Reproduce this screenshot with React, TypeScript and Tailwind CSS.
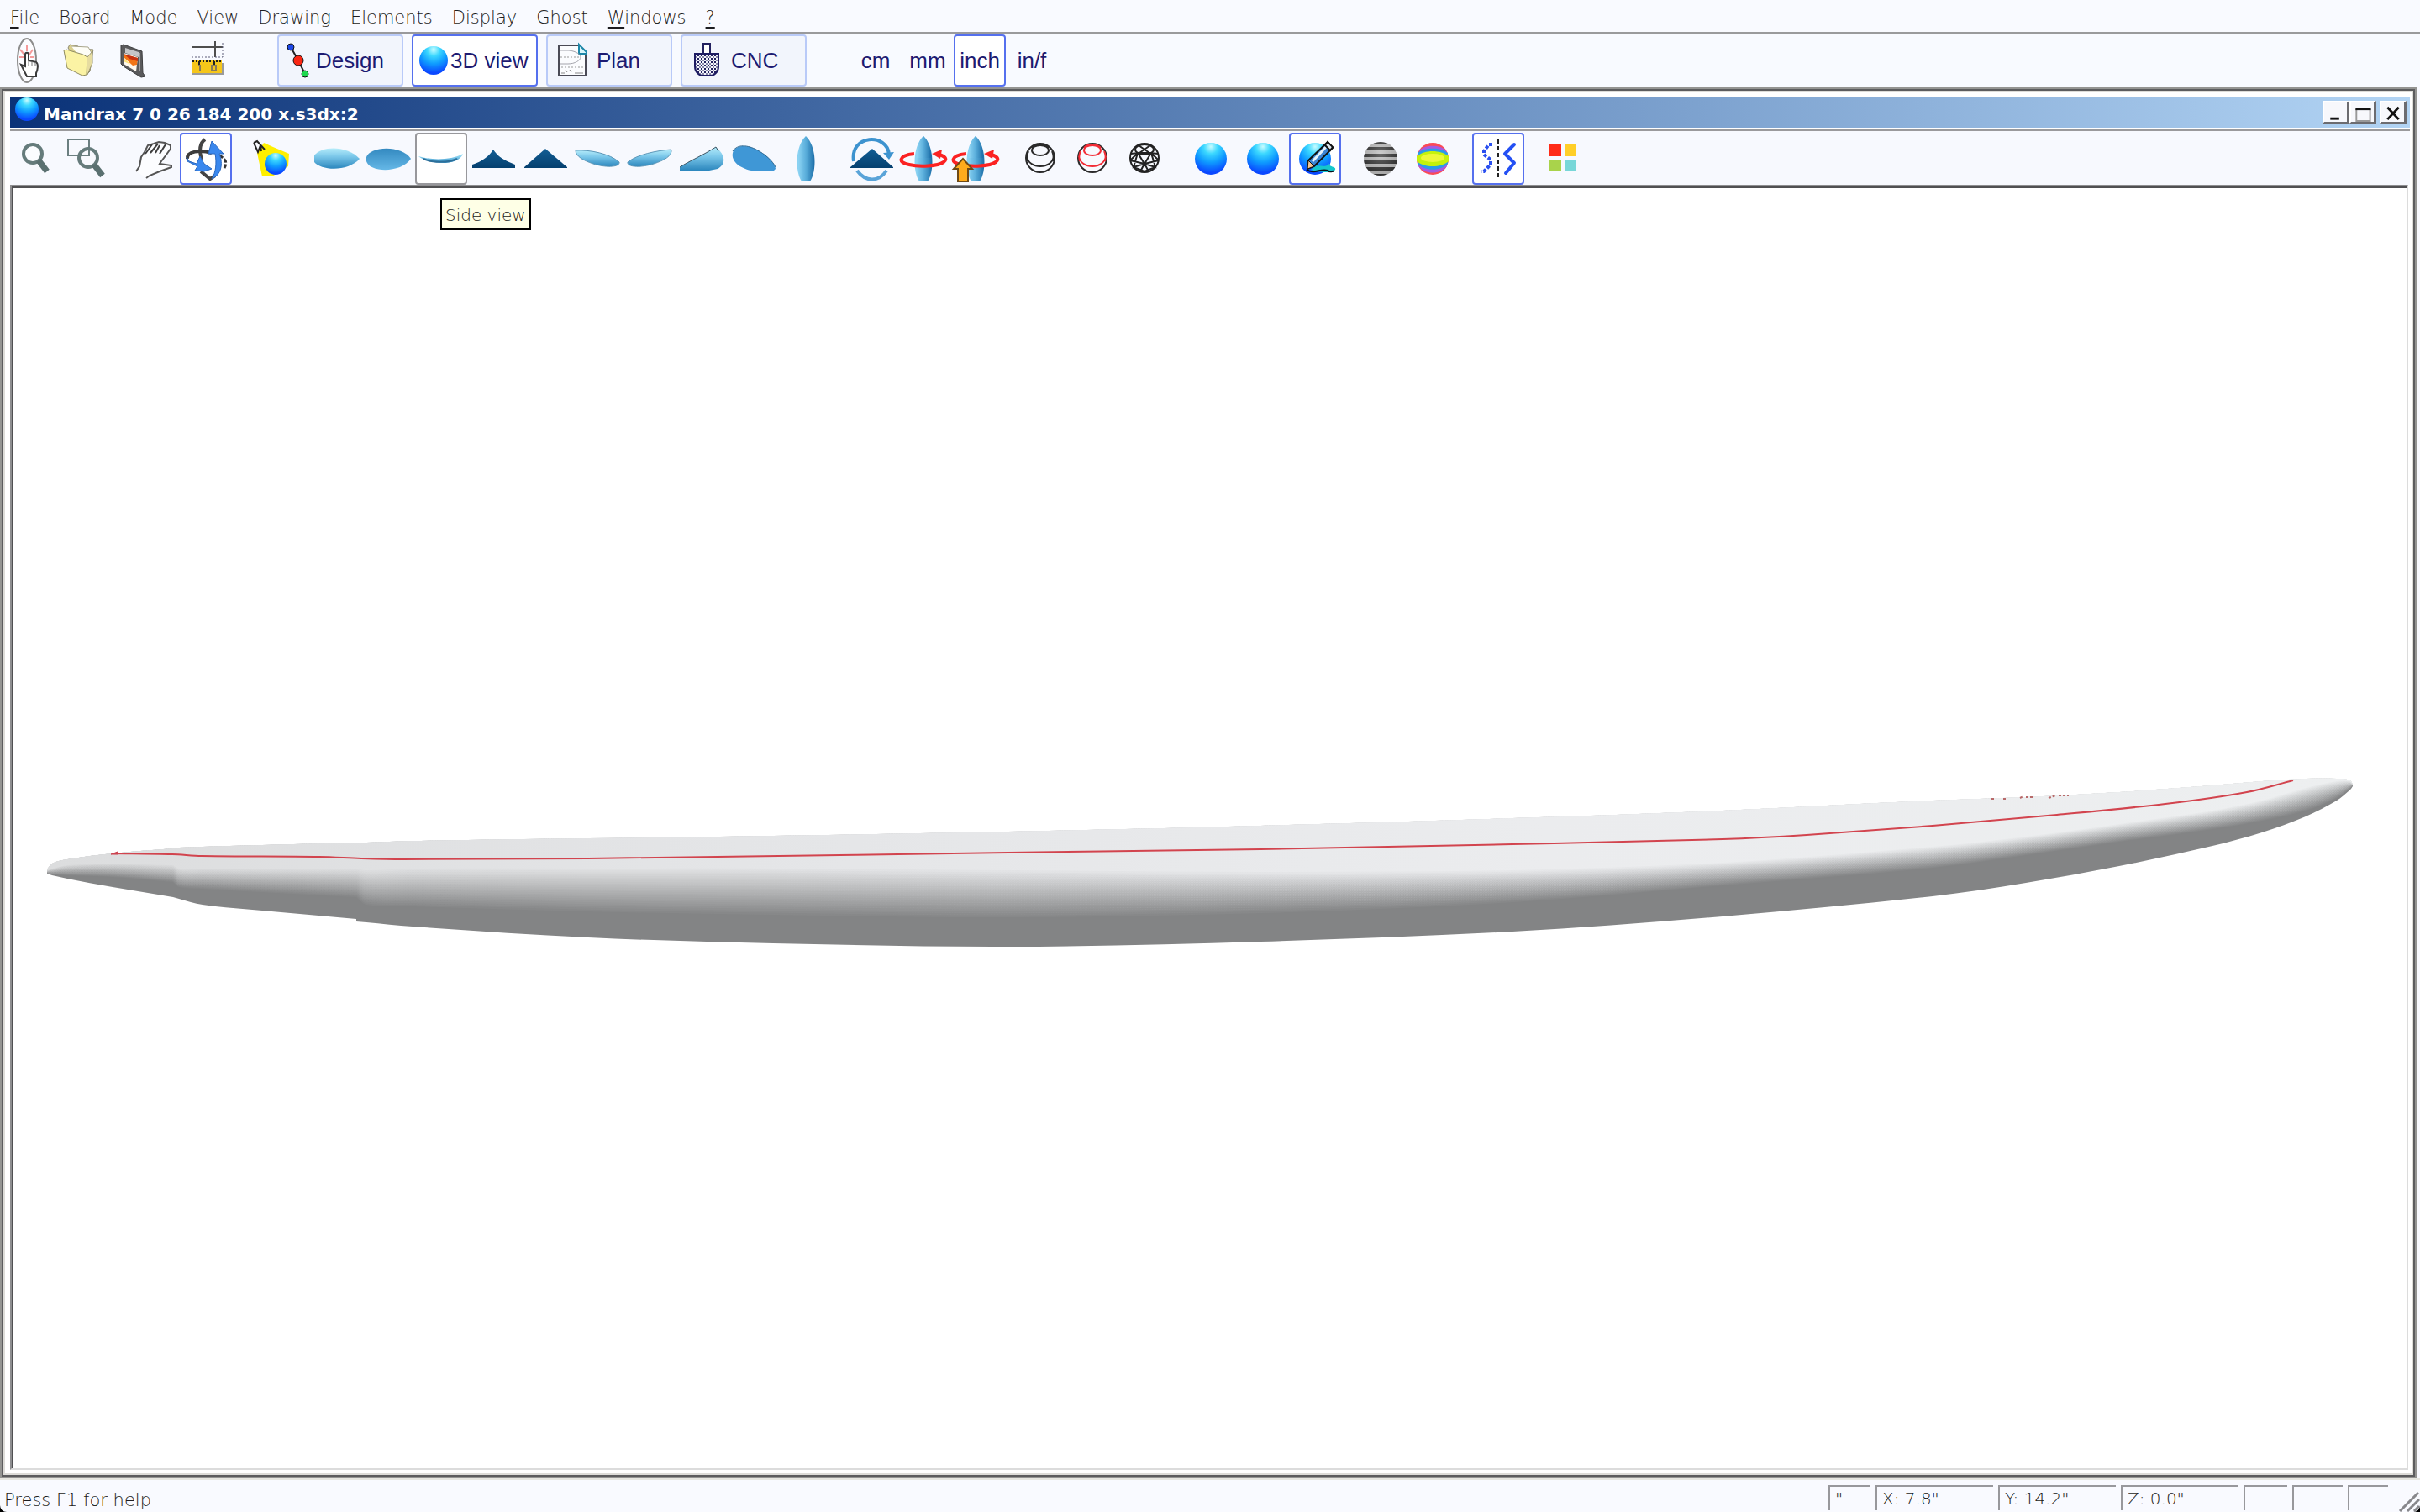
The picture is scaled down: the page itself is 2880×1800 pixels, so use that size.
import React, {PropsWithChildren, useState} from 'react'
import clsx from 'clsx'

type Station = {
  x: number;
  top: number;
  light: number;
  dark: number;
  bottom: number;
};

export default function App() {
  return (
    <div className="flex min-h-screen flex-col bg-black font-['DejaVu_Sans',sans-serif] text-xl text-[#1c1c20]">
      <div className="flex flex-1 flex-col rounded-b-lg bg-[#f9faff]">
        <MenuBar />
        <MainToolbar />
        <BoardWindow />
        <StatusBar />
      </div>
    </div>
  )
}

const menus = [
  {label: 'File', mnemonic: true},
  {label: 'Board'},
  {label: 'Mode'},
  {label: 'View'},
  {label: 'Drawing'},
  {label: 'Elements'},
  {label: 'Display'},
  {label: 'Ghost'},
  {label: 'Windows', mnemonic: true},
  {label: '?', mnemonic: true},
];

const MenuBar: React.FC = () => {
  return (
    <nav className="flex h-10 items-center gap-[23px] border-b-2 border-[#9a9a9c] pt-[6px] pl-3 text-[21px]" aria-label="Menu">
      {menus.map((menu) => (
        <button key={menu.label} type="button" className="font-extralight">
          {menu.mnemonic ? (
            <>
              <span className="underline decoration-2 underline-offset-4">{menu.label[0]}</span>{menu.label.slice(1)}
            </>
          ) : menu.label}
        </button>
      ))}
    </nav>
  );
}

const modes = [
  {label: 'Design', icon: <DesignIcon />},
  {label: '3D view', icon: <ViewIcon />},
  {label: 'Plan', icon: <PlanIcon />},
  {label: 'CNC', icon: <CncIcon />},
];

const units = ['cm', 'mm', 'inch', 'in/f'];

const MainToolbar: React.FC = () => {
  const [mode, setMode] = useState('3D view');
  const [unit, setUnit] = useState('inch');

  return (
    <div className="flex h-16 items-center bg-[#f8faff] font-['Liberation_Sans',Arial,sans-serif] text-[26px] text-[#1d1b72]">
      <div className="flex pl-px">
        <ToolButton label="New board"><NewBoardIcon /></ToolButton>
        <ToolButton label="Open"><OpenIcon /></ToolButton>
        <ToolButton label="Save"><SaveIcon /></ToolButton>
      </div>
      <div className="ml-[30px]">
        <ToolButton label="Measurements"><RulerIcon /></ToolButton>
      </div>
      <div className="ml-[51px] flex gap-[10px]">
        {modes.map((item) => (
          <button
            key={item.label}
            type="button"
            onClick={() => setMode(item.label)}
            className={clsx('flex h-[62px] w-[150px] items-center rounded-sm border-2 whitespace-nowrap', mode === item.label ? 'border-[#5570ee] bg-white' : 'border-[#b9caf8] bg-[#f2f5fc]')}
          >
            {item.icon}
            {item.label}
          </button>
        ))}
      </div>
      <div className="ml-[51px] flex">
        {units.map((item) => (
          <button
            key={item}
            type="button"
            onClick={() => setUnit(item)}
            className={clsx('h-[62px] w-[62px] rounded-sm border-2', unit === item ? 'border-[#5570ee] bg-white' : 'border-transparent')}
          >
            {item}
          </button>
        ))}
      </div>
    </div>
  );
}

const ToolButton: React.FC<PropsWithChildren<{label: string, active?: boolean, hovered?: boolean}>> = ({label, active, hovered, children}) => {
  return (
    <button
      type="button"
      aria-label={label}
      className={clsx('size-[62px] rounded-sm border-2', active && 'border-[#5570ee] bg-white', hovered && 'border-[#98989c] bg-white', !active && !hovered && 'border-transparent')}
    >
      <svg viewBox="2 2 58 58" className="size-full" fill="none" aria-hidden="true">{children}</svg>
    </button>
  );
}

const BoardWindow: React.FC = () => {
  return (
    <div className="mr-1 flex flex-1 flex-col border-2 border-[#949492]">
      <div className="flex flex-1 flex-col border-2 border-[#5c5c5e]">
        <div className="flex flex-1 flex-col border-2 border-[#dddcd8] bg-white pt-[6px] pr-[2px] pb-1 pl-[6px]">
          <header className="flex h-9 items-center bg-linear-to-r from-[#0a3278] to-[#b2d4f4] pr-1 pl-1 text-white">
            <svg viewBox="0 0 32 32" className="mb-2 size-8" aria-hidden="true">
              <circle cx="16" cy="16" r="14" fill="url(#ball)" />
            </svg>
            <h1 className="ml-1 flex-1 pt-1 font-bold">Mandrax 7 0 26 184 200 x.s3dx:2</h1>
            <WindowButton label="Minimize"><path d="M7 20H18" stroke="#111" strokeWidth="3" /></WindowButton>
            <WindowButton label="Maximize">
              <path d="M6 8V23H23V8" stroke="#999" strokeWidth="2" />
              <path d="M5 8H24" stroke="#111" strokeWidth="3" />
            </WindowButton>
            <span className="w-1" />
            <WindowButton label="Close"><path d="M7 6L21 21M21 6L7 21" stroke="#111" strokeWidth="3" /></WindowButton>
          </header>
          <div className="mt-[2px] flex h-[66px] items-start gap-4 border-t-2 border-[#9a9a9c] bg-[#f7f9fe] pt-[2px]">
            <ViewTools />
          </div>
          <main className="mr-[2px] flex flex-1 border-2 border-t-[#8e8e90] border-r-[#dcdcdc] border-b-[#dcdcdc] border-l-[#8e8e90]">
            <div className="flex flex-1 border-t-2 border-l-2 border-[#505052] bg-white">
              <BoardView />
            </div>
          </main>
        </div>
      </div>
    </div>
  );
}

const WindowButton: React.FC<PropsWithChildren<{label: string}>> = ({label, children}) => {
  return (
    <button type="button" aria-label={label} className="h-7 w-8 border-t-2 border-r-3 border-b-3 border-l-2 border-t-white border-r-[#6c6c70] border-b-[#6c6c70] border-l-white bg-[#f7f8fc]">
      <svg viewBox="0 0 27 24" className="size-full" fill="none" aria-hidden="true">{children}</svg>
    </button>
  );
}

const verticalBoard = 'M31 4C44 16 44 46 36 58H26C18 46 18 16 31 4Z';
const redRing = 'M20 25C1 27 0 36 14 38C26 41 48 40 55 35C60 31 56 28 50 26';
const redHead = 'M41 25L53 20L51 31Z';

const ViewTools: React.FC = () => {
  return (
    <>
      <div className="flex">
        <ToolButton label="Zoom">
          <circle cx="27" cy="25" r="11" stroke="#657b7b" strokeWidth="4" fill="#fbfdff" />
          <path d="M34 33L44 46" stroke="#5a7070" strokeWidth="7" />
        </ToolButton>
        <ToolButton label="Zoom window">
          <rect x="7" y="8" width="25" height="19" stroke="#6b7f80" strokeWidth="2" />
          <circle cx="31" cy="30" r="11" stroke="#657b7b" strokeWidth="4" />
          <path d="M38 38L48 51" stroke="#5a7070" strokeWidth="7" />
        </ToolButton>
      </div>
      <div className="flex">
        <ToolButton label="Pan">
          <path d="M10 46L14 40L16 29L20 23L24 15L31 13L37 11L44 12L51 15V19L46 26L40 34L38 37L45 38L52 39V41L38 46L26 51L22 54" stroke="#555" strokeWidth="2" fill="#fcfdff" />
          <path d="M21 25L29 14M27 24L36 13M33 24L38 15M38 25L45 14" stroke="#3e3e3e" strokeWidth="2" />
        </ToolButton>
        <ToolButton label="Rotate" active>
          <path d="M30 8C23 13 23 22 26 32" stroke="#444" strokeWidth="4" />
          <path d="M9 31C8 22 24 20 38 24" stroke="#3c3c3c" strokeWidth="4" />
          <path d="M47 27C54 31 57 35 53 42" stroke="#333" strokeWidth="3" strokeDasharray="5 2" />
          <path d="M25 46L36 55L42 51" stroke="#444" strokeWidth="4" />
          <path d="M8 29L11 34L20 37L24 28L29 37L38 43L29 46L18 45L21 40L9 34Z" fill="#3a88ee" stroke="#2a68c0" />
          <path d="M38 10L52 25H47C52 38 49 50 38 55C43 47 44 36 42 25H34Z" fill="#3a88ee" stroke="#2a68c0" />
        </ToolButton>
      </div>
      <ToolButton label="Light">
        <path d="M14 24L22 12L33 17L52 25L51 40L32 52H20Z" fill="#fff000" />
        <path d="M10 12L14 10L23 20M10 12L15 23L18 15L19 22" stroke="#222" strokeWidth="2" />
        <circle cx="36" cy="37" r="13" fill="url(#ball)" />
      </ToolButton>
      <div className="flex">
        <ToolButton label="Top view">
          <path d="M4 27C12 16 42 14 58 31C44 47 12 45 4 35Z" fill="url(#topBlue)" />
        </ToolButton>
        <ToolButton label="Bottom view">
          <path d="M4 29C8 16 46 14 57 31C46 48 8 48 4 34Z" fill="url(#bottomBlue)" />
        </ToolButton>
        <div className="relative">
          <ToolButton label="Side view" hovered>
            <path d="M4 28C20 33 42 33 57 25C55 31 48 35 36 36C22 36 10 33 4 28Z" fill="url(#topBlue)" />
            <path d="M10 31C20 36 40 36 50 31" stroke="#2c6f9a" strokeWidth="2" />
          </ToolButton>
          <div role="tooltip" className="absolute top-[78px] left-[30px] border-2 border-black bg-[#feffe6] px-1 pt-[2px] leading-8 font-extralight whitespace-nowrap">Side view</div>
        </div>
        <ToolButton label="Front view">
          <path d="M6 38C18 34 26 28 31 20C36 28 44 33 57 38V42H6Z" fill="url(#darkBlue)" />
        </ToolButton>
        <ToolButton label="Back view">
          <path d="M6 41L31 19L57 41V42H6Z" fill="url(#darkBlue)" />
        </ToolButton>
        <ToolButton label="Perspective top left">
          <path d="M5 21C22 20 46 25 57 35C58 41 42 42 26 37C14 33 5 28 5 21Z" fill="url(#topBlue)" stroke="#5d97b8" />
        </ToolButton>
        <ToolButton label="Perspective top right">
          <path d="M57 20C40 21 16 26 5 35C4 41 20 42 36 37C48 33 58 28 57 20Z" fill="url(#topBlue)" stroke="#5d97b8" />
        </ToolButton>
        <ToolButton label="Perspective front">
          <path d="M5 45V41C16 34 34 26 48 17C60 27 60 38 50 43L40 45Z" fill="url(#topBlue)" />
          <path d="M5 41C16 34 34 26 48 17L51 22" stroke="#3c5564" />
        </ToolButton>
        <ToolButton label="Perspective back">
          <path d="M6 24C8 15 22 14 32 19C44 24 57 36 57 43L55 45H28C14 42 4 34 6 24Z" fill="#3f97d6" />
          <path d="M6 22C12 13 24 15 34 20C44 25 54 34 57 41" stroke="#2f6890" />
        </ToolButton>
        <ToolButton label="Plan view">
          <path d={verticalBoard} fill="url(#sideBlue)" />
        </ToolButton>
      </div>
      <div className="flex">
        <ToolButton label="Spin around length">
          <path d="M10 34C5 2 50 0 52 26" stroke="#3d93cf" strokeWidth="4" />
          <path d="M45 24L58 23L52 32Z" fill="#3d93cf" />
          <path d="M14 45C24 59 40 59 49 45" stroke="#5aa4d8" strokeWidth="4" />
          <path d="M6 41L32 19L57 41V42H6Z" fill="url(#darkBlue)" />
        </ToolButton>
        <ToolButton label="Spin around height">
          <path d={verticalBoard} fill="url(#sideBlue)" />
          <path d={redRing} stroke="#fb2222" strokeWidth="4" />
          <path d={redHead} fill="#fb2222" />
          <path d="M31 4C37 10 40 20 40 30H22C22 20 25 10 31 4Z" fill="url(#sideBlue)" />
        </ToolButton>
        <ToolButton label="Spin and lift">
          <path d={verticalBoard} fill="url(#sideBlue)" />
          <path d={redRing} stroke="#fb2222" strokeWidth="4" />
          <path d={redHead} fill="#fb2222" />
          <path d="M31 4C37 10 40 20 40 30H22C22 20 25 10 31 4Z" fill="url(#sideBlue)" />
          <path d="M16 31L27 43H22V58H10V43H5Z" fill="#ffac1c" stroke="#6e4a16" strokeWidth="2" />
        </ToolButton>
      </div>
      <div className="flex">
        <ToolButton label="Slices">
          <Wire accent="#2a2a2a" />
        </ToolButton>
        <ToolButton label="Colored slices">
          <Wire accent="#f22c36" />
        </ToolButton>
        <ToolButton label="Mesh">
          <g stroke="#222" strokeWidth="2">
            <circle cx="30" cy="30" r="17" />
            <ellipse cx="30" cy="20" rx="11" ry="6" />
            <path d="M14 25L22 24L13 33M46 25L38 24L47 33M22 24H38L30 37ZM22 24L17 41L30 37L43 41L38 24M17 41L30 46L43 41M30 37L25 46M30 37L35 46M13 33L30 37L47 33M23 15L36 24M37 15L24 24" />
          </g>
        </ToolButton>
      </div>
      <div className="flex">
        <ToolButton label="Shaded">
          <circle cx="31" cy="31" r="19" fill="url(#ball)" />
        </ToolButton>
        <ToolButton label="Smooth shaded">
          <circle cx="31" cy="31" r="19" fill="url(#ball)" />
        </ToolButton>
        <ToolButton label="Shaded with drawing" active>
          <circle cx="31" cy="31" r="19" fill="url(#ball)" />
          <path d="M30 41C36 36 44 44 48 36C46 41 57 40 55 44C52 49 34 47 26 44Z" fill="#15c6cc" />
          <path d="M21 44C30 50 38 42 46 45C49 48 52 45 54 46" stroke="#081018" strokeWidth="2" />
          <path d="M46 11L52 18L30 40L22 43L23 33Z" fill="#3b85d4" stroke="#111" strokeWidth="2" />
          <path d="M44 17L28 34" stroke="#e8f3fb" strokeWidth="3" />
          <path d="M23 33L30 40L22 43Z" fill="#f5c795" stroke="#111" />
          <path d="M43 15L49 21L52 17L46 11Z" fill="#dfe8f0" stroke="#111" strokeWidth="2" />
        </ToolButton>
      </div>
      <div className="flex">
        <ToolButton label="Zebra">
          <circle cx="31" cy="31" r="20" fill="url(#zebra)" />
          <circle cx="31" cy="31" r="20" fill="url(#shine)" />
        </ToolButton>
        <ToolButton label="Curvature">
          <circle cx="31" cy="31" r="19" fill="#fb4a56" />
          <path d="M15 21C22 14 40 14 47 21L48 40C40 50 22 50 14 40Z" fill="#a45be0" />
          <path d="M13 24C22 17 40 17 49 24L49 37C40 46 22 46 13 37Z" fill="#2b9ce8" />
          <path d="M12 28C22 20 40 20 50 28V34C40 42 22 42 12 34Z" fill="#c4f20c" />
          <ellipse cx="31" cy="30" rx="14" ry="5" fill="#ecf83a" />
        </ToolButton>
      </div>
      <ToolButton label="Symmetry" active>
        <path d="M24 14H20L14 22V26L22 32V38L14 46H11" stroke="#2a4ff0" strokeWidth="4" strokeDasharray="4 2" />
        <path d="M31 8V54" stroke="#222" strokeWidth="2" strokeDasharray="5 3" />
        <path d="M50 14L39 25L50 36L40 48" stroke="#2450f4" strokeWidth="4" strokeLinejoin="round" strokeLinecap="round" />
      </ToolButton>
      <ToolButton label="Colors">
        <rect x="14" y="14" width="14" height="14" fill="#ff2c18" />
        <rect x="32" y="14" width="14" height="14" fill="#ffcf28" />
        <rect x="14" y="32" width="14" height="14" fill="#a9d34b" />
        <rect x="32" y="32" width="14" height="14" fill="#78d7d8" />
      </ToolButton>
      <Gradients />
    </>
  );
}

const Wire: React.FC<{accent: string}> = ({accent}) => {
  return (
    <g strokeWidth="2">
      <circle cx="30" cy="30" r="17" stroke="#2a2a2a" />
      <ellipse cx="30" cy="21" rx="10" ry="6" stroke={accent} />
      <path d="M20 18C24 13 36 13 40 18M14 28C16 44 44 44 46 28M16 22C14 26 14 30 15 34M44 22C46 26 46 30 45 34" stroke={accent} />
    </g>
  );
}

const Gradients: React.FC = () => {
  return (
    <svg className="size-0" aria-hidden="true">
      <defs>
        <radialGradient id="ball" cx="0.5" cy="0.12" r="0.9">
          <stop offset="0" stopColor="#c8fcff" />
          <stop offset="0.25" stopColor="#3cd8ff" />
          <stop offset="0.55" stopColor="#0f9cff" />
          <stop offset="0.9" stopColor="#0a48ff" />
        </radialGradient>
        <linearGradient id="topBlue" x1="0" y1="0" x2="0" y2="1">
          <stop offset="0" stopColor="#b5ecfa" />
          <stop offset="0.4" stopColor="#7cc8ea" />
          <stop offset="1" stopColor="#2b86bd" />
        </linearGradient>
        <linearGradient id="bottomBlue" x1="0" y1="0" x2="0" y2="1">
          <stop offset="0" stopColor="#3389c0" />
          <stop offset="1" stopColor="#65b7e6" />
        </linearGradient>
        <linearGradient id="sideBlue" x1="0" y1="0" x2="1" y2="0">
          <stop offset="0.1" stopColor="#8ad2f2" />
          <stop offset="0.5" stopColor="#5aaedb" />
          <stop offset="1" stopColor="#1c6ea8" />
        </linearGradient>
        <linearGradient id="darkBlue" x1="0" y1="0" x2="0" y2="1">
          <stop offset="0" stopColor="#125e94" />
          <stop offset="1" stopColor="#05406f" />
        </linearGradient>
        <radialGradient id="shine" cx="0.5" cy="0.35" r="0.65">
          <stop offset="0" stopColor="#fff" stopOpacity="0.35" />
          <stop offset="1" stopColor="#777" stopOpacity="0.2" />
        </radialGradient>
        <pattern id="zebra" y="1" width="62" height="8" patternUnits="userSpaceOnUse">
          <rect width="62" height="8" fill="#b4b4b4" />
          <rect width="62" height="4" fill="#1c1c1c" />
        </pattern>
      </defs>
    </svg>
  );
}

function NewBoardIcon() {
  return (
    <>
      <ellipse cx="31" cy="31" rx="11" ry="26" stroke="#8c8c8c" strokeWidth="2" fill="#fcfcff" />
      <path d="M23 18L28 24M38 18L34 24M31 13V20M22 27H27M35 27H39" stroke="#f59a9a" strokeWidth="2" />
      <path d="M29 24C29 21 33 21 33 24V31L42 33C45 35 44 42 42 46V50H31L26 40L24 36L29 38Z" fill="#fff" stroke="#3a3a3a" strokeWidth="2" />
      <path d="M33 31V37M37 32V37M41 33V38" stroke="#777" />
    </>
  );
}

function OpenIcon() {
  return (
    <>
      <path d="M18 16L20 12L30 14L33 17L48 18L47 23L44 44L40 48L36 44Z" fill="#d9cf8e" stroke="#8e8a70" />
      <path d="M22 14L42 15L46 22L43 42" fill="#fdfdf6" stroke="#a9a68c" />
      <path d="M13 19L16 18L36 24L41 27L40 48L35 49L17 40Z" fill="#fbf3a4" stroke="#8f8b62" />
      <path d="M41 27L47 20V34L41 48" fill="#e6dca0" stroke="#98946f" />
    </>
  );
}

function SaveIcon() {
  return (
    <>
      <path d="M19 13L22 12L44 20L45 46L48 50L43 51L22 38L19 35Z" fill="#5a5a5c" stroke="#3d3d3f" />
      <path d="M24 16L40 21V27L24 22Z" fill="#c5c5c8" />
      <path d="M22 22L39 27L37 44L22 35Z" fill="#fff8ee" />
      <path d="M22 24L39 28L38 36L33 37L22 27Z" fill="#f27415" />
      <path d="M22 23L39 28V32L29 29Z" fill="#c63110" />
      <path d="M22 28L31 36L22 32Z" fill="#ffe27a" />
      <path d="M41 22V44" stroke="#9b9b9e" strokeWidth="2" />
    </>
  );
}

function RulerIcon() {
  return (
    <>
      <path d="M12 19H48M39 12V31" stroke="#4e4e4e" strokeWidth="2" />
      <path d="M48 14V31H12" stroke="#5c5c78" strokeDasharray="2 2" />
      <path d="M15 38H50V52H12V48Z" fill="#9b9b9b" />
      <rect x="12" y="35" width="35" height="15" fill="#f6c61a" />
      <path d="M12 36H47" stroke="#1c1c1c" strokeWidth="2" strokeDasharray="2 2" />
      <path d="M20 36V40M38 36V40" stroke="#222" strokeWidth="2" />
      <path d="M19 41H21V48" stroke="#8a7a58" strokeWidth="2" />
      <rect x="35" y="41" width="5" height="6" stroke="#8a7a58" strokeWidth="2" />
    </>
  );
}

function DesignIcon() {
  return (
    <svg viewBox="2 2 44 58" className="h-full w-11" aria-hidden="true">
      <path d="M16 15L25 31L33 47" stroke="#222" strokeWidth="2" />
      <circle cx="16" cy="15" r="4" fill="#1d48e8" stroke="#111" />
      <circle cx="25" cy="31" r="6" fill="#fa2612" stroke="#111" />
      <circle cx="33" cy="47" r="4" fill="#1fd84e" stroke="#111" />
    </svg>
  );
}

function ViewIcon() {
  return (
    <svg viewBox="2 2 44 58" className="h-full w-11" aria-hidden="true">
      <circle cx="26" cy="31" r="17" fill="url(#ball)" />
    </svg>
  );
}

function PlanIcon() {
  return (
    <svg viewBox="2 2 58 58" className="h-full w-[58px]" fill="none" aria-hidden="true">
      <path d="M15 13H39L47 21V49H15Z" fill="#fbfcfe" stroke="#4a4a55" strokeWidth="2" />
      <path d="M39 12L48 21V23H39Z" fill="#d8f6fb" stroke="#1d87a8" strokeWidth="2" />
      <path d="M16 19H27C36 20 41 24 41 27C41 31 34 35 26 35H16" stroke="#a4a4ac" />
      <path d="M17 27H40M18 39H44" stroke="#999" strokeDasharray="2 2" />
      <path d="M23 42L25 45M28 42L30 45M18 46H22M34 46H44" stroke="#888" />
    </svg>
  );
}

function CncIcon() {
  return (
    <svg viewBox="2 2 58 58" className="h-full w-[58px]" fill="none" aria-hidden="true">
      <defs>
        <pattern id="grind" width="4" height="4" patternUnits="userSpaceOnUse">
          <rect width="4" height="4" fill="#f4f5fb" />
          <rect width="2" height="2" fill="#23215f" />
          <rect x="2" y="2" width="2" height="2" fill="#8988a8" />
        </pattern>
      </defs>
      <path d="M27 23V11H35V23" fill="#fff" stroke="#23215f" strokeWidth="2" />
      <path d="M17 23H45V38C45 45 40 49 35 49H27C22 49 17 45 17 38Z" fill="url(#grind)" stroke="#1d1b62" strokeWidth="2" />
    </svg>
  );
}

const tail: Station[] = [
  {x: 56, top: 1035, light: 1036, dark: 1040, bottom: 1040},
  {x: 62, top: 1028, light: 1034, dark: 1041, bottom: 1042},
  {x: 80, top: 1023, light: 1030, dark: 1042, bottom: 1046},
  {x: 134, top: 1016, light: 1028, dark: 1044, bottom: 1056},
  {x: 206, top: 1010, light: 1030, dark: 1050, bottom: 1068},
];

const rear: Station[] = [
  {x: 206, top: 1010, light: 1030, dark: 1050, bottom: 1068},
  {x: 213, top: 1009, light: 1034, dark: 1056, bottom: 1070},
  {x: 241, top: 1008, light: 1034, dark: 1058, bottom: 1077},
  {x: 312, top: 1006, light: 1034, dark: 1062, bottom: 1084},
  {x: 424, top: 1003, light: 1034, dark: 1068, bottom: 1094},
];

const body: Station[] = [
  {x: 424, top: 1003, light: 1034, dark: 1068, bottom: 1097},
  {x: 436, top: 1003, light: 1036, dark: 1077, bottom: 1098},
  {x: 491, top: 1001, light: 1034, dark: 1079, bottom: 1103},
  {x: 700, top: 998, light: 1034, dark: 1085, bottom: 1116},
  {x: 920, top: 995, light: 1034, dark: 1089, bottom: 1123},
  {x: 1200, top: 990, light: 1036, dark: 1092, bottom: 1127},
  {x: 1500, top: 983, light: 1038, dark: 1087, bottom: 1121},
  {x: 1800, top: 974, light: 1036, dark: 1074, bottom: 1109},
  {x: 2050, top: 965, light: 1027, dark: 1054, bottom: 1091},
  {x: 2300, top: 953, light: 1008, dark: 1033, bottom: 1067},
  {x: 2411, top: 949, light: 996, dark: 1018, bottom: 1051},
  {x: 2522, top: 943, light: 981, dark: 1002, bottom: 1031},
  {x: 2633, top: 935, light: 965, dark: 987, bottom: 1007},
  {x: 2692, top: 930, light: 953, dark: 977, bottom: 991},
  {x: 2744, top: 927, light: 938, dark: 965, bottom: 972},
  {x: 2781, top: 927, light: 930, dark: 950, bottom: 953},
  {x: 2797, top: 929, light: 930, dark: 939, bottom: 940},
  {x: 2800, top: 934, light: 934, dark: 935, bottom: 936},
];

const stringer = [
  [133, 1016], [205, 1017], [240, 1019], [380, 1020], [430, 1022], [480, 1023], [700, 1022], [1200, 1015],
  [1500, 1011], [1800, 1005], [2050, 999], [2150, 994], [2300, 983], [2448, 970], [2577, 957], [2674, 943], [2729, 929],
];

const BANDS = 24;

// smooth curve through the points, without the leading move
function curve(points: number[][]) {
  const slope = (i: number) => {
    const a = points[i - 1] ?? points[i];
    const b = points[i + 1] ?? points[i];
    return (b[1] - a[1]) / (b[0] - a[0]);
  };
  return points.slice(1).map(([x, y], i) => {
    const [fromX, fromY] = points[i];
    const dx = (x - fromX) / 3;
    return `C${fromX + dx} ${fromY + slope(i) * dx} ${x - dx} ${y - slope(i + 1) * dx} ${x} ${y}`;
  }).join('');
}

function outline(stations: Station[], lower: (s: Station) => number) {
  const top = stations.map((s) => [s.x, s.top]);
  const bottom = stations.map((s) => [s.x, lower(s)]).reverse();
  return `M${top[0].join(' ')}${curve(top)}L${bottom[0].join(' ')}${curve(bottom)}Z`;
}

const Hull: React.FC<{stations: Station[]}> = ({stations}) => {
  return (
    <g>
      <path d={outline(stations, (s) => s.bottom)} fill="#838485" />
      {Array.from({length: BANDS}, (_, i) => (
        <path
          key={i}
          d={outline(stations, (s) => s.dark + (s.light - s.dark) * (i / (BANDS - 1)))}
          fill="url(#deck)"
          opacity={1 / (BANDS - i)}
        />
      ))}
    </g>
  );
}

const BoardView: React.FC = () => {
  return (
    <svg viewBox="16 224 2848 1524" className="w-full" fill="none" role="img" aria-label="Board side view">
      <defs>
        <linearGradient id="deck" gradientUnits="userSpaceOnUse" x1="56" y1="0" x2="2800" y2="0">
          <stop offset="0" stopColor="#dcddde" />
          <stop offset="0.3" stopColor="#e4e5e7" />
          <stop offset="0.65" stopColor="#ebecee" />
          <stop offset="1" stopColor="#edeff0" />
        </linearGradient>
      </defs>
      <Hull stations={tail} />
      <Hull stations={rear} />
      <Hull stations={body} />
      <path d={`M133 1016${curve(stringer)}`} stroke="#d2444e" strokeWidth="2" />
      <path d="M132 1017L140 1014V1017Z" fill="#cc4450" stroke="#cc4450" />
      <path d="M2370 951H2374M2384 951H2387M2404 950L2408 948M2411 949H2420M2438 950L2446 947M2450 947H2462" stroke="#b86a6a" strokeWidth="2" strokeDasharray="3 2" />
    </svg>
  );
}

const StatusBar: React.FC = () => {
  return (
    <footer className="flex h-10 items-end gap-[6px] border-t-2 border-[#e6e6e0] font-extralight">
      <p className="flex-1 pb-[2px] pl-[5px] text-[21px] leading-6">Press F1 for help</p>
      <StatusCell className="w-[50px]">"</StatusCell>
      <StatusCell className="w-[140px]">X: 7.8"</StatusCell>
      <StatusCell className="w-[140px]">Y: 14.2"</StatusCell>
      <StatusCell className="w-[140px]">Z: 0.0"</StatusCell>
      <StatusCell className="w-[52px]" />
      <StatusCell className="w-[60px]" />
      <StatusCell className="w-12" />
      <svg viewBox="0 0 32 24" className="h-6 w-8" fill="none" aria-hidden="true">
        <path d="M8 23L30 1M17 23L31 9M25 23L31 17" stroke="#88888c" strokeWidth="3" />
      </svg>
    </footer>
  );
}

const StatusCell: React.FC<PropsWithChildren<{className: string}>> = ({className, children}) => {
  return (
    <div className={`${className} mb-[2px] h-[30px] border-t-2 border-l-2 border-[#98989c] pt-[2px] pl-[6px] leading-6`}>
      {children}
    </div>
  );
}
